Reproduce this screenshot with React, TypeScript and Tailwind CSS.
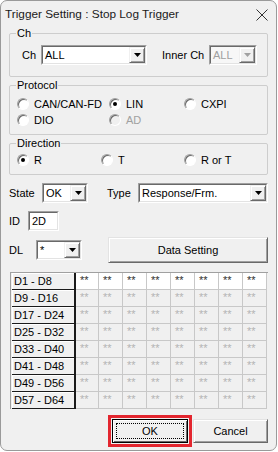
import React from "react";

const rows = ["D1 - D8", "D9 - D16", "D17 - D24", "D25 - D32", "D33 - D40", "D41 - D48", "D49 - D56", "D57 - D64"];

function Combo({ className, value, disabled }: { className: string; value: string; disabled?: boolean }) {
  return (
    <div className={`flex h-[20px] border border-t-[#a0a0a0] border-l-[#a0a0a0] border-r-white border-b-white ${className}`}>
      <div className={`flex flex-1 border border-t-[#696969] border-l-[#696969] border-r-[#e3e3e3] border-b-[#e3e3e3] ${disabled ? "bg-[#f7f7f7]" : "bg-white"}`}>
        <span className={`flex-1 pl-[2px] leading-[16px] ${disabled ? "text-[#a0a0a0]" : "text-black"}`}>{value}</span>
        <span className="flex w-[16px] items-center justify-center border border-t-[#f0f0f0] border-l-[#f0f0f0] border-r-[#696969] border-b-[#696969] bg-[#f0f0f0] shadow-[inset_1px_1px_0_#fff,inset_-1px_-1px_0_#a0a0a0]">
          <svg width="7" height="4" viewBox="0 0 7 4">
            <path d="M0 0h7L3.5 4z" fill={disabled ? "#a0a0a0" : "#000"} />
          </svg>
        </span>
      </div>
    </div>
  );
}

function Radio({ label, checked, disabled }: { label: string; checked?: boolean; disabled?: boolean }) {
  return (
    <div className="flex h-[16px] items-center gap-[5px]">
      <span className={`flex h-[12px] w-[12px] items-center justify-center rounded-full border border-t-[#a0a0a0] border-l-[#a0a0a0] border-r-white border-b-white shadow-[inset_1px_1px_0_#696969] ${disabled ? "bg-[#f0f0f0]" : "bg-white"}`}>
        {checked && <span className="h-[4px] w-[4px] rounded-full bg-black" />}
      </span>
      <span className={disabled ? "text-[#a0a0a0]" : "text-black"}>{label}</span>
    </div>
  );
}

function Group({ title, className, children }: { title: string; className: string; children: React.ReactNode }) {
  return (
    <div className={`relative rounded-[2px] border border-[#cdcdcd] ${className}`}>
      <span className="absolute -top-[8px] left-[6px] bg-[#f0f0f0] px-px leading-[14px]">{title}</span>
      {children}
    </div>
  );
}

export default function App() {
  return (
    <div className="h-[452px] w-[278px] bg-white font-['Liberation_Sans',Arial,sans-serif] text-[11px] text-black">
      <div className="flex h-[451px] w-[277px] flex-col overflow-hidden rounded-[7px] border border-[#9a9a9a] bg-[#f0f0f0]">
        <div className="flex h-[28px] shrink-0 items-center justify-between pl-[4px] pr-[8px]">
          <span className="text-[11.8px] text-[#1a1a1a]">Trigger Setting : Stop Log Trigger</span>
          <svg width="12" height="12" viewBox="0 0 12 12">
            <path d="M0.5 0.5l11 11M11.5 0.5l-11 11" stroke="#333" strokeWidth="1" />
          </svg>
        </div>

        <div className="flex flex-col px-[8px]">
          <Group title="Ch" className="mt-[4px] h-[44px]">
            <div className="flex items-center pl-[12px] pt-[11px]">
              <span className="w-[19px]">Ch</span>
              <Combo className="w-[106px]" value="ALL" />
              <span className="ml-[15px] w-[47px]">Inner Ch</span>
              <Combo className="w-[48px]" value="ALL" disabled />
            </div>
          </Group>

          <Group title="Protocol" className="mt-[8px] h-[50px]">
            <div className="grid grid-cols-[92px_75px_1fr] pl-[7px] pt-[10px]">
              <Radio label="CAN/CAN-FD" />
              <Radio label="LIN" checked />
              <Radio label="CXPI" />
              <Radio label="DIO" />
              <Radio label="AD" disabled />
            </div>
          </Group>

          <Group title="Direction" className="mt-[8px] h-[32px]">
            <div className="grid grid-cols-[84px_83px_1fr] pl-[7px] pt-[8px]">
              <Radio label="R" checked />
              <Radio label="T" />
              <Radio label="R or T" />
            </div>
          </Group>

          <div className="mt-[8px] flex items-center">
            <span className="w-[33px]">State</span>
            <Combo className="w-[46px]" value="OK" />
            <span className="ml-[19px] w-[31px]">Type</span>
            <Combo className="w-[130px]" value="Response/Frm." />
          </div>

          <div className="mt-[8px] flex items-center">
            <span className="w-[19px]">ID</span>
            <div className="flex h-[20px] w-[31px] border border-t-[#a0a0a0] border-l-[#a0a0a0] border-r-white border-b-white">
              <div className="flex-1 border border-t-[#696969] border-l-[#696969] border-r-[#e3e3e3] border-b-[#e3e3e3] bg-white pl-[2px] leading-[16px]">2D</div>
            </div>
          </div>

          <div className="mt-[6px] flex h-[26px] items-center">
            <span className="w-[27px]">DL</span>
            <Combo className="w-[46px]" value="*" />
            <button className="ml-[26px] h-[26px] w-[160px] border border-t-[#e3e3e3] border-l-[#e3e3e3] border-r-[#696969] border-b-[#696969] bg-[#f0f0f0] shadow-[inset_1px_1px_0_#fff,inset_-1px_-1px_0_#a0a0a0]">
              Data Setting
            </button>
          </div>

          <div className="ml-px mt-[9px] w-[258px] border-l border-t border-[#a0a0a0] pl-px">
            {rows.map((r, i) => (
              <div key={r} className="flex h-[17px]">
                <div className="h-[17px] w-[64px] border-b border-r-2 border-b-[#1a1a1a] border-r-[#1a1a1a] bg-[#f0f0f0] pl-[2px] leading-[16px] shadow-[inset_1px_1px_0_#fff]">
                  {r}
                </div>
                {Array.from({ length: 8 }).map((_, j) => (
                  <div
                    key={j}
                    className={`h-[17px] border-b border-r border-[#c8c8c8] pl-[4px] text-[11px] leading-[15px] ${j === 0 ? "w-[23px]" : "w-[24px]"} ${i === 0 ? "bg-white text-[#303030]" : "bg-[#f0f0f0] text-[#b4b4b4]"}`}
                  >
                    **
                  </div>
                ))}
              </div>
            ))}
          </div>

          <div className="mt-[10px] flex justify-end gap-[5px]">
            <button className="h-[24px] w-[76px] border border-black bg-[#f0f0f0] p-[3px] shadow-[inset_1px_1px_0_#fff,inset_-1px_-1px_0_#696969] outline outline-[3px] outline-offset-[1px] outline-[#e3262f]">
              <span className="flex h-full w-full items-center justify-center border border-dotted border-black">OK</span>
            </button>
            <button className="h-[24px] w-[75px] border border-t-[#e3e3e3] border-l-[#e3e3e3] border-r-[#696969] border-b-[#696969] bg-[#f0f0f0] shadow-[inset_1px_1px_0_#fff,inset_-1px_-1px_0_#a0a0a0]">
              Cancel
            </button>
          </div>
        </div>
      </div>
    </div>
  );
}
